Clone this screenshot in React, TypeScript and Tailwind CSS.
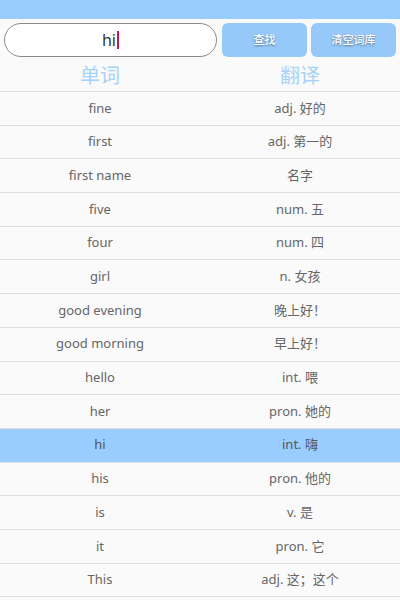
const words: [string, string][] = [
  ["fine", "adj. 好的"],
  ["first", "adj. 第一的"],
  ["first name", "名字"],
  ["five", "num. 五"],
  ["four", "num. 四"],
  ["girl", "n. 女孩"],
  ["good evening", "晚上好！"],
  ["good morning", "早上好！"],
  ["hello", "int. 喂"],
  ["her", "pron. 她的"],
  ["hi", "int. 嗨"],
  ["his", "pron. 他的"],
  ["is", "v. 是"],
  ["it", "pron. 它"],
  ["This", "adj. 这；这个"],
];

const font = { fontFamily: '"Noto Sans", "Noto Sans CJK SC", sans-serif' };

export default function App() {
  const selected = "hi";
  return (
    <div className="h-[600px] w-[400px] overflow-hidden bg-[#fafafa]" style={font}>
      <div className="h-[19px] bg-[#99ccff]" />

      <div className="mt-[4px] flex h-[34px] items-stretch gap-[4px] px-[4px]">
        <div className="flex w-[213px] items-center justify-center rounded-full border border-[#8a8a8a] bg-white">
          <span className="text-[16px] text-[#333]">hi</span>
          <span className="ml-[1px] h-[18px] w-[2px] bg-[#c2185b]" />
        </div>
        <button className="ml-[1px] flex-1 rounded-[6px] bg-[#96c8f9] text-[11px] font-medium text-white [text-shadow:0_1px_2px_rgba(0,0,0,0.45)]">
          查找
        </button>
        <button className="flex-1 rounded-[6px] bg-[#96c8f9] text-[11px] font-medium text-white [text-shadow:0_1px_2px_rgba(0,0,0,0.45)]">
          清空词库
        </button>
      </div>

      <div className="flex h-[35px] items-center border-b border-[#dedede] pt-[3px] text-[20px] text-[#a6d2fa]">
        <div className="flex-1 text-center">单词</div>
        <div className="flex-1 text-center">翻译</div>
      </div>

      <div>
        {words.map(([w, t]) => (
          <div
            key={w}
            className={
              w === selected
                ? "flex h-[33.7px] items-center border-b border-[#dedede] bg-[#99ccff] text-[13px] text-[#555]"
                : "flex h-[33.7px] items-center border-b border-[#dedede] text-[13px] text-[#666]"
            }
          >
            <div className="flex-1 text-center">{w}</div>
            <div className="flex-1 text-center">{t}</div>
          </div>
        ))}
      </div>
    </div>
  );
}
